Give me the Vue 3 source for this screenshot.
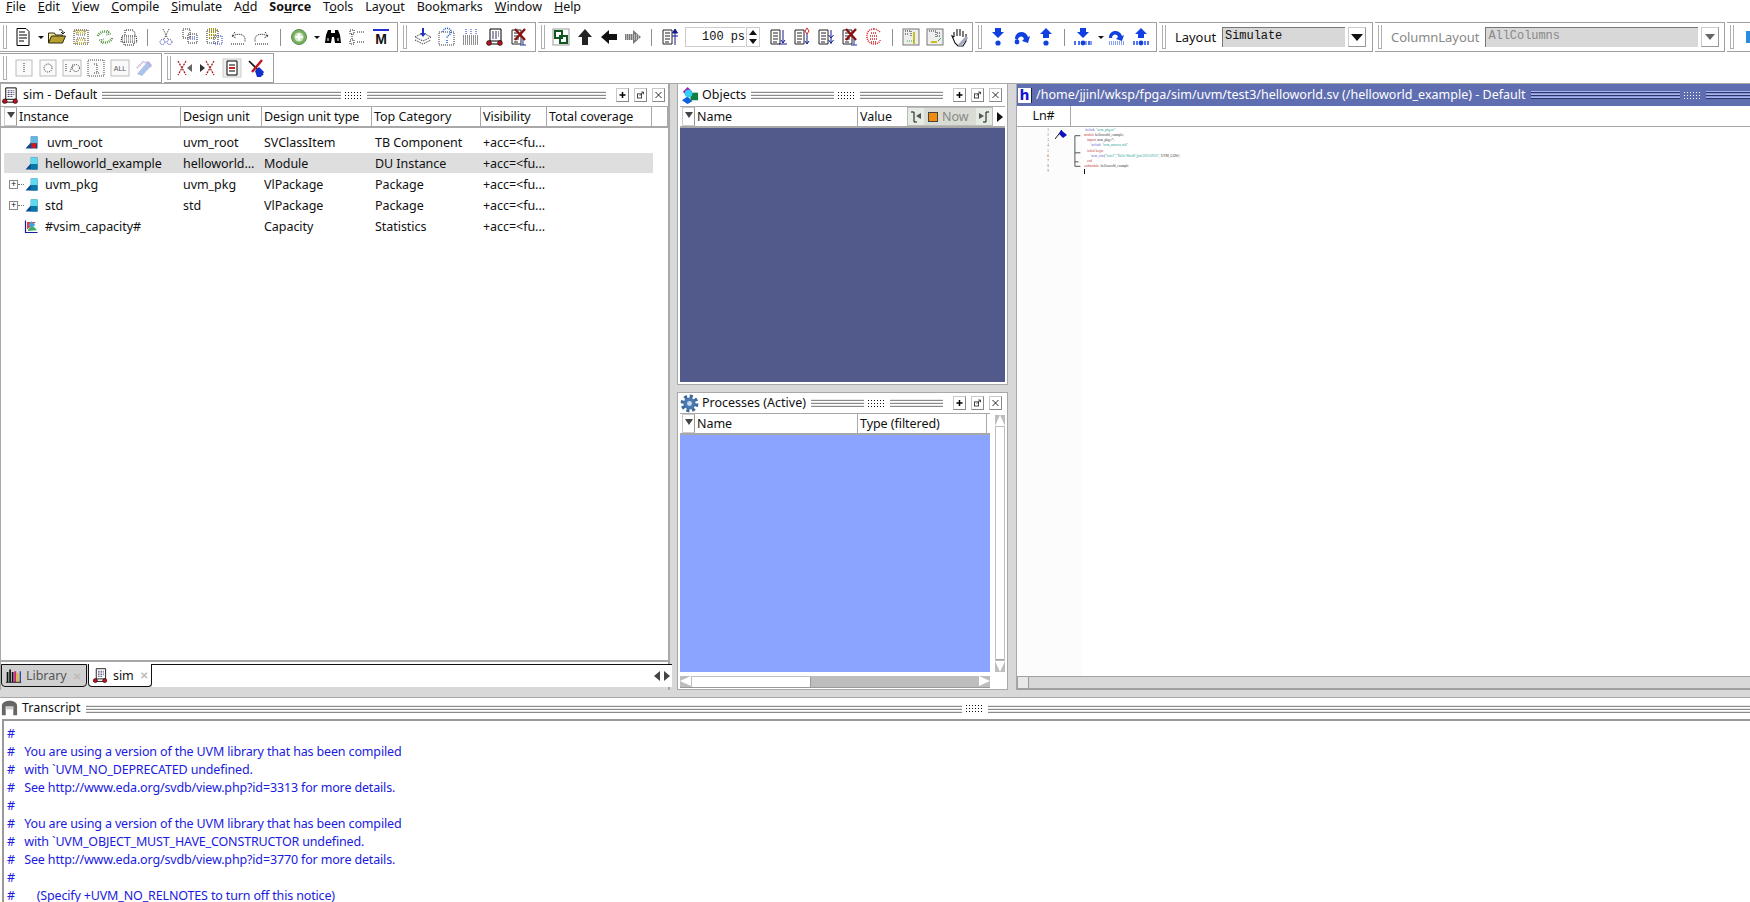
<script setup>
const menus = [
  { pre: "", u: "F", post: "ile" },
  { pre: "", u: "E", post: "dit" },
  { pre: "", u: "V", post: "iew" },
  { pre: "", u: "C", post: "ompile" },
  { pre: "", u: "S", post: "imulate" },
  { pre: "A", u: "d", post: "d" },
  { pre: "So", u: "u", post: "rce", bold: true },
  { pre: "T", u: "o", post: "ols" },
  { pre: "Layo", u: "u", post: "t" },
  { pre: "Boo", u: "k", post: "marks" },
  { pre: "", u: "W", post: "indow" },
  { pre: "", u: "H", post: "elp" },
];

// dithered strokes stand in for the greyed-out toolbar bitmaps
const dot = 'stroke-dasharray="1 1" fill="none"';
const simIcon = `<path d="M5 2h11v12H5z" fill="#fff" stroke="#000"/><path d="M7 5h7M7 7h7M7 9h7M7 11h5" stroke="#336" stroke-dasharray="2 1"/><path d="M3 14l-1 3h14" stroke="#000" fill="none"/><circle cx="4" cy="16" r="2.4" fill="#c01020" stroke="#000" stroke-width=".6"/><circle cx="15" cy="16" r="2.4" fill="#c01020" stroke="#000" stroke-width=".6"/>`;
const docLines = `<path d="M3 3h9v14H3z" fill="#fff" stroke="#222"/><path d="M5 6h5M5 9h5M5 12h5M5 15h4" stroke="#222"/>`;
const icons = {
  new: `<path d="M4 1.5h9l3 3v14H4z" fill="#fff" stroke="#000"/><path d="M6 5h6M6 8h8M6 11h8M6 14h5" stroke="#000"/>`,
  open: `<path d="M1.5 16V6h6l1 2h7v2" fill="#f3e8a0" stroke="#2c2c10"/><path d="M1.5 16l3-7h14l-3 7z" fill="#b8a030" stroke="#2c2c10"/><path d="M12 3c2-1 4 0 4 3M14 5l2 2 2-2" stroke="#222" fill="none"/>`,
  save: `<rect x="3" y="3" width="14" height="14" stroke="#222" ${dot}/><path d="M6 3v5h8V3M6 17v-6h8v6" stroke="#555" ${dot}/><path d="M4 4h12M4 16h12M5 6h10M5 13h10" stroke="#c8b820" stroke-width="1.4" ${dot}/>`,
  reload: `<path d="M3 9c1-4 7-6 11-3M17 11c-1 4-7 6-11 3" stroke="#5a9a40" stroke-width="2.6" ${dot}/><path d="M12 3l4 4-5 1M8 17l-4-4 5-1" stroke="#3a7a30" ${dot}/>`,
  print: `<path d="M6 8V3h8l2 3v3M3 9h14l1 6H2zM5 15v3h10v-3" stroke="#111" ${dot}/><path d="M3 11h14M3 13h14" stroke="#666" ${dot}/>`,
  cut: `<path d="M7 2l5 10M13 2L8 12" stroke="#333" ${dot}/><circle cx="6.5" cy="15" r="2.5" stroke="#2030c0" ${dot}/><circle cx="13.5" cy="15" r="2.5" stroke="#2030c0" ${dot}/>`,
  copy: `<rect x="3" y="2" width="7" height="9" stroke="#222" ${dot}/><rect x="8" y="7" width="9" height="9" stroke="#222" ${dot}/><path d="M10 10h5M10 12h5" stroke="#2030c0" ${dot}/>`,
  paste: `<rect x="3" y="3" width="11" height="13" stroke="#222" ${dot}/><path d="M5 2h7v3H5M5 8h7M5 11h7" stroke="#a89810" stroke-width="2" ${dot}/><rect x="10" y="9" width="8" height="8" stroke="#2030c0" ${dot}/>`,
  undo: `<path d="M4 9l3-4M4 9l4 2M5 9c4-3 12-2 12 3v3M3 17h14" stroke="#111" ${dot}/>`,
  redo: `<path d="M16 9l-3-4M16 9l-4 2M15 9c-4-3-12-2-12 3v3M3 17h14" stroke="#111" ${dot}/>`,
  add: `<circle cx="10" cy="10" r="7.5" fill="#78b060" stroke="#5a8a50"/><circle cx="10" cy="10" r="4.6" fill="#d0e8c0"/><path d="M10 6.5v7M6.5 10h7" stroke="#fff" stroke-width="2.2"/>`,
  find: `<path d="M3 8l2-5h3v3h4V3h3l2 5 1 8h-6l-1-6h-2l-1 6H2z" fill="#000"/><path d="M5 11v3M15 11v3" stroke="#fff"/>`,
  tree: `<path d="M3 3h4v4H3zM3 13h4v4H3zM10 5h7M10 15h7M5 7v6" stroke="#222" ${dot}/>`,
  m: `<rect x="2" y="2" width="16" height="2" fill="#2030d0"/><text x="10" y="17" font-size="14" font-weight="700" font-family="Liberation Sans" text-anchor="middle" fill="#111">M</text>`,
  stack: `<path d="M2 10l8-4 8 4-8 4z M2 13l8 4 8-4" stroke="#111" ${dot}/><path d="M10 1v6" stroke="#2030c0" stroke-width="2"/><path d="M7 6h6l-3 4z" fill="#2030c0"/>`,
  query: `<rect x="2" y="5" width="15" height="13" stroke="#333" ${dot}/><path d="M6 5c0-5 8-5 8 0 0 3-4 3-4 6M10 13v3" stroke="#2060d0" stroke-width="1.6" ${dot}/>`,
  grid: `<path d="M2 9h16M2 11h16M2 13h16M2 15h16M2 17h16" stroke="#222" ${dot}/><path d="M5 2v5M10 2v5M15 2v5" stroke="#2030c0" ${dot}/>`,
  sim: simIcon,
  noblock: `${docLines}<path d="M6 2l10 11M16 2L6 13" stroke="#8a1010" stroke-width="2.4"/><path d="M14 12v6M11 18h6" stroke="#2030a0"/>`,
  chain: `<rect x="2" y="2" width="16" height="16" fill="#fff" stroke="#999"/><rect x="4" y="4" width="7" height="7" fill="none" stroke="#105820" stroke-width="2"/><rect x="9" y="9" width="7" height="7" fill="none" stroke="#105820" stroke-width="2"/>`,
  up: `<path d="M10 2l7 8h-4v8H7v-8H3z" fill="#222"/>`,
  left: `<path d="M2 10l8-7v4h8v6h-8v4z" fill="#111"/>`,
  right: `<path d="M18 10l-8-7v4H2v6h8v4z" fill="#777"/><path d="M3 8h14M3 10h14M3 12h14" stroke="#fff" stroke-dasharray="1 1"/>`,
  runup: `${docLines}<path d="M15 18V3M12.5 6L15 2l2.5 4zM12 9h6" stroke="#101a90" fill="#101a90"/>`,
  rundown: `${docLines}<path d="M15 3v13M11 17h8M13 13l2 3 2-3" stroke="#101a90" fill="none"/>`,
  runred: `${docLines}<path d="M15 7v10M13 14l2 3 2-3" stroke="#101a90" fill="none"/><path d="M15 1l2 3-2 3-2-3z" fill="#fff" stroke="#d02020"/>`,
  runall: `${docLines}<path d="M15 3v14M12.5 8l2.5 3 2.5-3M12.5 13l2.5 3 2.5-3" stroke="#101a90" fill="none"/>`,
  break: `<path d="M10 2c-5 0-7 3-7 7 0 5 3 8 7 8 3 0 6-2 6-4M16 5c-2-2-4-3-6-3M7 6h6M6 9h8M6 12h8M7 15h5" stroke="#d82020" stroke-width="1.6" stroke-dasharray="1 1" fill="none"/>`,
  wave: `<rect x="2" y="2" width="16" height="16" fill="#eee" stroke="#777"/><path d="M4 4h6v5M4 7h4" stroke="#222" ${dot}/><path d="M13 5v12" stroke="#c8c020" stroke-width="2"/><path d="M6 14h7" stroke="#40a040" stroke-dasharray="1 1"/>`,
  wave2: `<rect x="2" y="2" width="16" height="16" fill="#eee" stroke="#777"/><path d="M4 4h7v6M12 6h3M12 9h3" stroke="#222" ${dot}/><path d="M6 15h6" stroke="#c8c020" stroke-width="2"/><path d="M13 14l3-3" stroke="#40a040"/>`,
  hand: `<path d="M5 10V5M8 9V2M11 9V2M14 10V4M5 10l-2-1 3 7 3 3h5l3-5V7" fill="#fff" stroke="#111" stroke-width="1.1"/><path d="M10 19l8-9" stroke="#a0a8c0" stroke-width="3"/>`,
  stepin: `<path d="M7 1h6v4h3l-6 6-6-6h3z" fill="#1040e0"/><circle cx="10" cy="16" r="2.6" fill="#1040e0"/>`,
  stepover: `<path d="M3 12c0-9 11-9 13-2l2-1-2 7-6-2 2-2c-1-4-6-3-6 1z" fill="#1040e0"/><circle cx="5" cy="15" r="2.4" fill="#1040e0"/>`,
  stepout: `<path d="M10 1l6 6h-3v4H7V7H4z" fill="#1040e0"/><circle cx="10" cy="16" r="2.6" fill="#1040e0"/>`,
  stepin2: `<path d="M7 1h6v4h3l-6 6-6-6h3z" fill="#1040e0"/><path d="M2 14v4M6 14v4M16 14v4" stroke="#1040e0" stroke-width="1.5"/><circle cx="10" cy="16" r="2.4" fill="#1040e0"/><path d="M13 14v4M18 14v4" stroke="#1040e0"/>`,
  stepover2: `<path d="M2 11c0-9 11-9 13-2l2-1-2 6-6-2 2-2c-1-4-6-3-6 1z" fill="#1040e0"/><path d="M2 15h16M2 17h16" stroke="#1040e0" stroke-dasharray="1 1"/>`,
  stepout2: `<path d="M10 1l6 6h-3v4H7V7H4z" fill="#1040e0"/><path d="M3 14v4M6 14v4M14 14v4M17 14v4" stroke="#1040e0" stroke-width="1.4"/><circle cx="10" cy="16" r="2.4" fill="#1040e0"/>`,
  i: `<rect x="2" y="2" width="16" height="16" fill="#fafafa" stroke="#bbb"/><path d="M10 5v10" stroke="#333" ${dot}/>`,
  o: `<rect x="2" y="2" width="16" height="16" fill="#fafafa" stroke="#bbb"/><circle cx="10" cy="10" r="4" stroke="#333" ${dot}/>`,
  io: `<rect x="1" y="2" width="18" height="16" fill="#fafafa" stroke="#bbb"/><path d="M4 6v8M8 14l3-8" stroke="#333" ${dot}/><circle cx="14" cy="10" r="3.5" stroke="#333" ${dot}/>`,
  box: `<rect x="2" y="2" width="16" height="16" fill="#fafafa" stroke="#444" stroke-dasharray="1 1"/><path d="M8 6h3v9M8 15h5" stroke="#333" ${dot}/>`,
  all: `<rect x="1" y="2" width="18" height="16" fill="#fafafa" stroke="#bbb"/><text x="10" y="13" font-size="7" font-family="Liberation Sans" text-anchor="middle" fill="#555">ALL</text>`,
  fade: `<path d="M3 16L14 3l4 4L8 18z" fill="#8aa8e0" opacity=".7"/><path d="M3 10l6-6 6 1 2 5" stroke="#c0a0d0" stroke-width="2" ${dot}/>`,
  xl: `<path d="M4 3l8 14M12 3L4 17" stroke="#a01818" stroke-width="1.2" stroke-dasharray="2 1"/><path d="M18 6l-5 4 5 4z" fill="#666"/>`,
  xr: `<path d="M8 3l8 14M16 3L8 17" stroke="#a01818" stroke-width="1.2" stroke-dasharray="2 1"/><path d="M2 6l5 4-5 4z" fill="#333"/>`,
  list: `<rect x="1" y="1" width="18" height="18" fill="#eee" stroke="#ccc"/><path d="M5 3h10v14H5z" fill="#fff" stroke="#000"/><path d="M7 7h6M7 13h6" stroke="#000"/><path d="M7 10h6" stroke="#d02020" stroke-width="2"/>`,
  xblue: `<path d="M3 3l14 14" stroke="#111" stroke-width="1.6"/><path d="M16 2L6 14" stroke="#c01818" stroke-width="2.4"/><path d="M9 13l4-4 5 5-3 5h-4z" fill="#1030d0"/>`,
  mod: `<path d="M2 18l7-8V2h9v16z" fill="#0a4a90"/><rect x="9" y="2" width="9" height="9" fill="#60d8f0"/><rect x="9" y="11" width="9" height="7" fill="#0878a8"/>`,
  modbug: `<path d="M2 18l7-8V2h9v16z" fill="#0a4a90"/><rect x="9" y="2" width="9" height="9" fill="#60b8e0"/><circle cx="13" cy="14" r="3.4" fill="#d01818"/><path d="M9 11l8 7M17 11l-8 7" stroke="#d01818"/>`,
  cap: `<path d="M2 2v16h16" stroke="#1818a0" stroke-width="1.6" fill="none"/><path d="M4 4h12L4 14z" fill="#e04040"/><path d="M5 16c2-8 9-8 12-1z" fill="#40b060"/><path d="M10 3l5 5-5 4-4-4z" fill="#40a0e0"/>`,
  lib: `<path d="M3 18V6M6 18V3M9 18V6" stroke="#111" stroke-width="2"/><path d="M12 18V5" stroke="#d02080" stroke-width="2.4"/><path d="M15 18V7" stroke="#e0c020" stroke-width="2.4"/><path d="M18 18V5" stroke="#2040d0" stroke-width="1.6"/><path d="M1 18h18" stroke="#111"/>`,
  obj: `<path d="M8 1l5 5-5 5-5-5z" fill="#a020c0"/><path d="M8 11l5 5-5 3-6-4z" fill="#1060e0"/><rect x="11" y="7" width="8" height="8" fill="#108040"/><circle cx="9" cy="8" r="4" fill="#30d0f0"/>`,
  gear: `<circle cx="10" cy="10" r="6.4" fill="#4a78b0"/><circle cx="10" cy="10" r="7.6" fill="none" stroke="#3e6898" stroke-width="3.6" stroke-dasharray="3.2 2.77"/><circle cx="10" cy="10" r="2.6" fill="#c8d8ec"/>`,
  trans: `<path d="M2 17V7c0-7 16-7 16 0v10h-4V8H6v9z" fill="#666"/><path d="M6 8h8v3H6z" fill="#ccc"/>`,
  plusBtn: `<path d="M6 2v8M2 6h8" stroke="#000" stroke-width="2"/>`,
  floatBtn: `<rect x="2" y="4.5" width="5.5" height="5.5" fill="none" stroke="#111"/><path d="M5 7l5-5M7 2h3v3" fill="none" stroke="#111"/>`,
  closeBtn: `<path d="M2 2l8 8M10 2l-8 8" stroke="#111" stroke-width="1.2"/>`,
};

const row1a = ["new", "|v", "open", "save", "reload", "print", "|", "cut", "copy", "paste", "undo", "redo", "|", "add", "|v", "find", "tree", "m"];
const row1b = ["stack", "query", "grid", "sim", "noblock"];
const row1c = ["chain", "up", "left", "right", "|"];
const row1e = ["rundown", "runred", "runall", "noblock", "break", "|", "wave", "wave2", "hand"];
const row1f = ["stepin", "stepover", "stepout", "|", "stepin2", "|v", "stepover2", "stepout2"];
const row2a = ["i", "o", "io", "box", "all", "fade"];
const row2b = ["xl", "xr", "list", "xblue"];
const winBtns = ["plusBtn", "floatBtn", "closeBtn"];

const simRows = [
  { icon: "modbug", name: "uvm_root", unit: "uvm_root", type: "SVClassItem", cat: "TB Component", nudge: true },
  { icon: "mod", name: "helloworld_example", unit: "helloworld...", type: "Module", cat: "DU Instance", active: true },
  { icon: "mod", name: "uvm_pkg", unit: "uvm_pkg", type: "VlPackage", cat: "Package", plus: true },
  { icon: "mod", name: "std", unit: "std", type: "VlPackage", cat: "Package", plus: true },
  { icon: "cap", name: "#vsim_capacity#", unit: "", type: "Capacity", cat: "Statistics" },
];

const lineNos = [1, 2, 3, 4, 5, 6, 7, 8, 9];

const transcript = [
  "#",
  "#   You are using a version of the UVM library that has been compiled",
  "#   with `UVM_NO_DEPRECATED undefined.",
  "#   See http://www.eda.org/svdb/view.php?id=3313 for more details.",
  "#",
  "#   You are using a version of the UVM library that has been compiled",
  "#   with `UVM_OBJECT_MUST_HAVE_CONSTRUCTOR undefined.",
  "#   See http://www.eda.org/svdb/view.php?id=3770 for more details.",
  "#",
  "#       (Specify +UVM_NO_RELNOTES to turn off this notice)",
];
</script>

<template>
  <div class="app">
    <nav class="menubar">
      <span v-for="m in menus" :key="m.u + m.post" class="menu" :class="{ bold: m.bold }">{{ m.pre }}<u>{{ m.u }}</u>{{ m.post }}</span>
    </nav>

    <div class="toolrow">
      <div class="tgroup g1">
        <template v-for="(k, i) in row1a" :key="i">
          <span v-if="k === '|'" class="tsep"></span>
          <span v-else-if="k === '|v'" class="tarrow"></span>
          <svg v-else class="ico" viewBox="0 0 20 20" v-html="icons[k]"></svg>
        </template>
      </div>
      <div class="tgroup g2">
        <svg v-for="k in row1b" :key="k" class="ico" viewBox="0 0 20 20" v-html="icons[k]"></svg>
      </div>
      <div class="tgroup g3">
        <template v-for="(k, i) in row1c" :key="i">
          <span v-if="k === '|'" class="tsep"></span>
          <svg v-else class="ico" viewBox="0 0 20 20" v-html="icons[k]"></svg>
        </template>
        <svg class="ico" viewBox="0 0 20 20" v-html="icons.runup"></svg>
        <div class="runlen">100 ps</div>
        <div class="spin"><i class="sp-up"></i><i class="sp-down"></i></div>
        <template v-for="(k, i) in row1e" :key="'e' + i">
          <span v-if="k === '|'" class="tsep"></span>
          <svg v-else class="ico" viewBox="0 0 20 20" v-html="icons[k]"></svg>
        </template>
      </div>
      <div class="tgroup g4">
        <template v-for="(k, i) in row1f" :key="i">
          <span v-if="k === '|'" class="tsep"></span>
          <span v-else-if="k === '|v'" class="tarrow"></span>
          <svg v-else class="ico" viewBox="0 0 20 20" v-html="icons[k]"></svg>
        </template>
      </div>
      <div class="tgroup g5">
        <span class="tlabel">Layout</span>
        <div class="combo">Simulate</div>
        <span class="ddbtn"><i></i></span>
      </div>
      <div class="tgroup g6 off">
        <span class="tlabel">ColumnLayout</span>
        <div class="combo">AllColumns</div>
        <span class="ddbtn"><i></i></span>
      </div>
      <div class="tgroup g7">
        <span class="edge-ico"></span>
      </div>
    </div>

    <div class="toolrow second">
      <div class="tgroup r2a">
        <svg v-for="k in row2a" :key="k" class="ico" viewBox="0 0 20 20" v-html="icons[k]"></svg>
      </div>
      <div class="tgroup r2b">
        <svg v-for="k in row2b" :key="k" class="ico" viewBox="0 0 20 20" v-html="icons[k]"></svg>
      </div>
    </div>

    <div class="workspace">
      <section class="panel left">
        <header class="ptitle">
          <svg class="pico" viewBox="0 0 20 20" v-html="icons.sim"></svg>
          <span class="ptext">sim - Default</span>
          <div class="grip"><span class="rule"></span><span class="dots"></span><span class="rule"></span></div>
          <svg v-for="b in winBtns" :key="b" class="pbtn" viewBox="0 0 12 12" v-html="icons[b]"></svg>
        </header>
        <div class="thead">
          <span class="filter"><i></i></span>
          <span class="th" style="width: 164px">Instance</span>
          <span class="th" style="width: 81px">Design unit</span>
          <span class="th" style="width: 110px">Design unit type</span>
          <span class="th" style="width: 109px">Top Category</span>
          <span class="th" style="width: 66px">Visibility</span>
          <span class="th" style="width: 105px">Total coverage</span>
          <span class="th" style="flex: 1"></span>
        </div>
        <div class="tree">
          <div v-for="r in simRows" :key="r.name" class="trow" :class="{ active: r.active }">
            <span class="c0">
              <span class="plus" :class="{ show: r.plus }">+</span>
              <svg class="tico" viewBox="0 0 20 20" v-html="icons[r.icon]"></svg>
              <span :class="{ nudge: r.nudge }">{{ r.name }}</span>
            </span>
            <span class="c1">{{ r.unit }}</span>
            <span class="c2">{{ r.type }}</span>
            <span class="c3">{{ r.cat }}</span>
            <span class="c4">+acc=&lt;fu...</span>
          </div>
        </div>
        <div class="tabbar">
          <span class="tab off"><svg class="tabico" viewBox="0 0 20 20" v-html="icons.lib"></svg>Library<b>✕</b></span>
          <span class="tab on"><svg class="tabico" viewBox="0 0 20 20" v-html="icons.sim"></svg>sim<b>✕</b></span>
          <span class="tabfill"></span>
          <span class="tabnav"><i class="nl"></i><i class="nr"></i></span>
        </div>
      </section>

      <div class="midcol">
        <section class="panel objects">
          <header class="ptitle">
            <svg class="pico" viewBox="0 0 20 20" v-html="icons.obj"></svg>
            <span class="ptext">Objects</span>
            <div class="grip"><span class="rule"></span><span class="dots"></span><span class="rule"></span></div>
            <svg v-for="b in winBtns" :key="b" class="pbtn" viewBox="0 0 12 12" v-html="icons[b]"></svg>
          </header>
          <div class="thead">
            <span class="filter"><i></i></span>
            <span class="th" style="width: 163px">Name</span>
            <span class="th value">Value</span>
            <div class="nowbox">
              <svg class="nowico" viewBox="0 0 14 14"><path d="M2 2h3v10h3" stroke="#111" fill="none"/><path d="M7 6l5-3v6z" fill="#555"/></svg>
              <span class="now"><i></i>Now</span>
              <svg class="nowico" viewBox="0 0 14 14"><path d="M12 2H9v10H6" stroke="#111" fill="none"/><path d="M7 6L2 3v6z" fill="#555"/></svg>
            </div>
            <span class="more"></span>
          </div>
          <div class="fill dark"></div>
        </section>

        <section class="panel processes">
          <header class="ptitle">
            <svg class="pico" viewBox="0 0 20 20" v-html="icons.gear"></svg>
            <span class="ptext">Processes (Active)</span>
            <div class="grip"><span class="rule"></span><span class="dots"></span><span class="rule"></span></div>
            <svg v-for="b in winBtns" :key="b" class="pbtn" viewBox="0 0 12 12" v-html="icons[b]"></svg>
          </header>
          <div class="procbody">
            <div class="proclist">
              <div class="thead">
                <span class="filter"><i></i></span>
                <span class="th" style="width: 163px">Name</span>
                <span class="th" style="width: 129px">Type (filtered)</span>
              </div>
              <div class="fill light"></div>
            </div>
            <div class="vscroll"><i class="au"></i><span class="vtrack"></span><i class="ad"></i></div>
          </div>
          <div class="hscroll">
            <i class="al"></i><span class="thumb"></span><span class="track"></span><i class="ar"></i>
          </div>
        </section>
      </div>

      <section class="panel source">
        <header class="ptitle blue">
          <span class="hicon">h</span>
          <span class="ptext">/home/jjinl/wksp/fpga/sim/uvm/test3/helloworld.sv (/helloworld_example) - Default</span>
          <div class="grip"><span class="rule"></span><span class="dots"></span><span class="rule"></span></div>
        </header>
        <div class="lnhead"><span>Ln#</span></div>
        <div class="code">
          <div class="gutter">
            <div v-for="n in lineNos" :key="n" class="ln" :class="{ red: n === 6 || n === 7 }">{{ n }}</div>
          </div>
          <div class="marks">
            <svg class="flag" viewBox="0 0 14 10"><path d="M0 10L7 1" stroke="#111"/><path d="M6 1l6 5-4 3-4-4z" fill="#1010c0"/></svg>
            <svg class="folds" viewBox="0 0 10 40"><path d="M1 3h6M1 3v34h6M1 22h6M1 32h4" stroke="#444" fill="none"/></svg>
          </div>
          <div class="lines">
            <div><span class="k">`include</span> <span class="s">"uvm_pkg.sv"</span></div>
            <div><span class="m">module</span> helloworld_example;</div>
            <div class="i1"><span class="m">import</span> uvm_pkg::*;</div>
            <div class="i2"><span class="k">`include</span> <span class="s">"uvm_macros.svh"</span></div>
            <div class="i1"><span class="m">initial begin</span></div>
            <div class="i2"><span class="k">`uvm_info</span>(<span class="s">"info1","Hello World! jjinl 2023.09.05"</span>, UVM_LOW)</div>
            <div class="i1"><span class="m">end</span></div>
            <div><span class="m">endmodule:</span> helloworld_example</div>
            <div class="caret"></div>
          </div>
        </div>
        <div class="srcscroll"><i class="al2"></i><span class="track2"></span></div>
      </section>
    </div>

    <section class="transcript">
      <header class="ptitle">
        <svg class="pico" viewBox="0 0 20 20" v-html="icons.trans"></svg>
        <span class="ptext">Transcript</span>
        <div class="grip tgrip"><span class="rule"></span><span class="dots"></span><span class="rule"></span></div>
      </header>
      <div class="log">
        <div v-for="(l, i) in transcript" :key="i" class="logline">{{ l }}</div>
      </div>
    </section>
  </div>
</template>

<style>
body {
  background: #d8d8d8;
  overflow: hidden;
}
</style>

<style scoped>
.app {
  width: 1750px;
  height: 902px;
  overflow: hidden;
  display: flex;
  flex-direction: column;
  font-family: "Noto Sans", sans-serif;
  font-size: 12.5px;
  letter-spacing: -0.05px;
  color: #111;
  background: #fff;
}

.menubar {
  height: 22px;
  display: flex;
  padding-left: 6px;
  gap: 12px;
  line-height: 13px;
  flex: none;
  align-items: flex-start;
}

.menu u {
  text-underline-offset: 1px;
}

.menu.bold {
  font-weight: 700;
}

.toolrow {
  height: 31px;
  flex: none;
  display: flex;
  gap: 2px;
}

.toolrow.second {
  height: 30px;
}

.tgroup {
  display: flex;
  align-items: center;
  height: 30px;
  box-sizing: border-box;
  border: 1px solid #a0a0a0;
  border-width: 1px 1px 1px 0;
  position: relative;
}

.tgroup::before {
  content: "";
  position: absolute;
  left: 3px;
  top: 2px;
  bottom: 2px;
  width: 2px;
  border: 1px solid #b0b0b0;
  border-width: 0 1px 1px 1px;
}

.g1 { width: 398px; padding-left: 11px; }
.g2 { width: 136px; padding-left: 11px; }
.g3 { width: 435px; padding-left: 11px; }
.g4 { width: 182px; padding-left: 11px; }
.g5 { width: 214px; padding-left: 16px; }
.g6 { width: 350px; padding-left: 16px; }
.g7 { flex: 1; border-right: 0; }
.r2a { width: 162px; padding-left: 12px; }
.r2b { width: 110px; padding-left: 8px; }

.ico {
  width: 20px;
  height: 20px;
  margin: 0 2px;
  flex: none;
  overflow: visible;
}

.tsep {
  width: 13px;
  height: 17px;
  flex: none;
  background: linear-gradient(#222 50%, transparent 50%) center / 1px 2px repeat-y;
}

.tarrow {
  width: 10px;
  height: 20px;
  flex: none;
  position: relative;
}

.tarrow::after {
  content: "";
  position: absolute;
  left: 3px;
  top: 9px;
  border: 3px solid transparent;
  border-top: 3px solid #111;
}

.runlen {
  width: 60px;
  height: 20px;
  margin-left: 3px;
  box-sizing: border-box;
  border: 1px solid #ccc;
  border-width: 1px 0 1px 1px;
  text-align: right;
  padding-right: 0;
  font: 12px/18px "Liberation Mono", monospace;
  white-space: pre;
}

.spin {
  width: 14px;
  height: 20px;
  margin: 0 6px 0 1px;
  display: flex;
  flex-direction: column;
  justify-content: space-between;
  border: 1px solid #ccc;
  box-sizing: border-box;
  align-items: center;
  padding: 2px 0;
}

.sp-up, .sp-down {
  width: 0;
  height: 0;
  border: 4px solid transparent;
}

.sp-up {
  border-top: 0;
  border-bottom: 5px solid #111;
}

.sp-down {
  border-bottom: 0;
  border-top: 5px solid #111;
}

.tlabel {
  margin-right: 6px;
  font-size: 13px;
}

.combo {
  height: 20px;
  background: #d8d8d8;
  border-top: 1px solid #777;
  border-left: 1px solid #777;
  box-sizing: border-box;
  padding-left: 2px;
  font: 12px/17px "Liberation Mono", monospace;
}

.g5 .combo { width: 123px; }
.g6 .combo { width: 213px; }

.ddbtn {
  width: 18px;
  height: 20px;
  margin-left: 3px;
  box-sizing: border-box;
  border: 1px solid #ccc;
  border-bottom-color: #999;
  border-right-color: #999;
  display: flex;
  align-items: center;
  justify-content: center;
}

.ddbtn i {
  width: 0;
  height: 0;
  border: 6px solid transparent;
  border-bottom: 0;
  border-top: 7px solid #111;
}

.off .tlabel, .off .combo {
  color: #888;
}

.off .ddbtn i {
  border-width: 6px 5px 0;
  border-top-color: #666;
}

.edge-ico {
  position: absolute;
  right: 0;
  top: 8px;
  width: 4px;
  height: 12px;
  background: #2a8ce0;
}

.workspace {
  height: 614px;
  flex: none;
  display: flex;
  background: #d8d8d8;
  gap: 7px;
  box-sizing: border-box;
  border-top: 1px solid #a8a8a8;
}

.panel {
  background: #fff;
  display: flex;
  flex-direction: column;
  box-sizing: border-box;
}

.left {
  width: 670px;
  height: 606px;
  border-right: 2px solid #a8a8a8;
  border-left: 1px solid #a8a8a8;
}

.midcol {
  width: 331px;
  flex: none;
  display: flex;
  flex-direction: column;
  gap: 7px;
}

.objects {
  height: 301px;
  border: 1px solid #a8a8a8;
  border-top: 0;
  padding: 0 2px 2px;
}

.processes {
  height: 298px;
  border: 1px solid #a8a8a8;
  padding: 0 2px 1px;
}

.processes .ptitle {
  height: 20px;
}

.source {
  flex: 1;
  margin-left: 1px;
  height: 606px;
  border-left: 1px solid #a8a8a8;
  overflow: hidden;
}

.ptitle {
  height: 22px;
  flex: none;
  display: flex;
  align-items: center;
  padding-right: 3px;
}

.ptext {
  white-space: nowrap;
  flex: none;
  font-size: 12.5px;
  letter-spacing: 0;
  position: relative;
  top: -1px;
}

.pico {
  width: 19px;
  height: 19px;
  flex: none;
  margin: 0 3px 0 0;
}

.grip {
  flex: 1;
  display: flex;
  align-items: center;
  margin: 0 5px;
  height: 9px;
}

.rule {
  flex: 1;
  height: 8px;
  background: repeating-linear-gradient(#e8e8e8 0 1px, #8a8a8a 1px 2px, #fff 2px 3px);
}

.dots {
  width: 18px;
  margin: 0 4px;
  height: 7px;
  background: radial-gradient(circle at 0.5px 0.5px, #111 0.5px, transparent 0.7px) 0 0 / 3px 3px;
}

.pbtn {
  width: 13px;
  height: 14px;
  margin-left: 5px;
  box-sizing: border-box;
  padding: 1px;
  border: 1px solid #c8c8c8;
  border-right-color: #888;
  border-bottom-color: #888;
  flex: none;
}

.blue {
  background: #5f6eb0;
  color: #fff;
  padding-right: 0;
}

.blue .ptext {
  font-size: 12.5px;
  letter-spacing: 0.01px;
}

.blue .rule {
  background: repeating-linear-gradient(#a8b4f0 0 1px, #2c3468 1px 2px, #8a96d8 2px 3px);
}

.blue .grip {
  margin: 0 0 0 5px;
  flex: none;
  width: 324px;
}

.blue .dots {
  background-image: radial-gradient(circle at 0.5px 0.5px, #fff 0.5px, transparent 0.7px);
}

.hicon {
  width: 13px;
  height: 15px;
  margin: 0 4px 0 1px;
  background: #fff;
  border-right: 1px solid #223;
  color: #1414d0;
  font: 700 14px/14px "DejaVu Sans", sans-serif;
  text-align: center;
  flex: none;
}

.thead {
  height: 22px;
  flex: none;
  display: flex;
  box-sizing: border-box;
  border-top: 1px solid #a8a8a8;
  border-bottom: 2px solid #a8a8a8;
  padding-left: 3px;
}

.objects .thead, .processes .thead {
  padding-left: 2px;
}

.filter {
  width: 13px;
  flex: none;
  box-sizing: border-box;
  border: 1px solid #ccc;
  border-right-color: #999;
  display: flex;
  justify-content: center;
  padding-top: 4px;
}

.filter i {
  width: 0;
  height: 0;
  border: 4px solid transparent;
  border-top: 6px solid #444;
  border-bottom: 0;
}

.th {
  flex: none;
  box-sizing: border-box;
  border-right: 1px solid #a8a8a8;
  padding-left: 2px;
  line-height: 20px;
  white-space: nowrap;
  overflow: hidden;
}

.tree {
  flex: 1;
  padding: 4px 0 0 3px;
  border-bottom: 2px solid #a8a8a8;
}

.trow {
  height: 21px;
  display: flex;
  align-items: center;
  width: 649px;
  white-space: nowrap;
}

.trow.active {
  background: linear-gradient(#dedede 20px, #fff 20px);
}

.c0 {
  width: 179px;
  display: flex;
  align-items: center;
  flex: none;
}

.plus {
  width: 9px;
  height: 9px;
  margin: 0 0 0 5px;
  box-sizing: border-box;
  border: 1px solid transparent;
  font: 9px/7px "Liberation Sans", sans-serif;
  text-align: center;
  color: transparent;
  flex: none;
  position: relative;
}

.plus.show {
  border-color: #888;
  color: #111;
}

.plus.show::after {
  content: "";
  position: absolute;
  left: 8px;
  top: 3px;
  width: 6px;
  border-top: 1px dotted #777;
}

.tico {
  width: 15px;
  height: 15px;
  margin: 0 6px 0 6px;
  flex: none;
}

.nudge {
  margin-left: 2px;
}

.c1 { width: 81px; flex: none; }
.c2 { width: 111px; flex: none; }
.c3 { width: 108px; flex: none; }
.c4 { width: 70px; flex: none; }

.tabbar {
  height: 26px;
  flex: none;
  display: flex;
  align-items: flex-start;
  margin-top: 2px;
  background: #d8d8d8;
}

.tab {
  height: 23px;
  box-sizing: border-box;
  display: flex;
  align-items: center;
  padding: 0 3px;
  border: 1px solid #111;
  border-top: 0;
  border-radius: 0 0 4px 4px;
  flex: none;
}

.tab b {
  color: #bbb;
  font-size: 10px;
  margin-left: 6px;
}

.tab.off {
  width: 86px;
  background: #d0d0d0;
  color: #555;
  border-top: 1px solid #111;
}

.tab.on {
  width: 64px;
  background: #fff;
  margin-left: 1px;
}

.tabico {
  width: 17px;
  height: 17px;
  margin-right: 4px;
  flex: none;
}

.tabfill {
  width: 500px;
  height: 23px;
  box-sizing: border-box;
  border-top: 1px solid #111;
  background: #fff;
  flex: none;
}

.tabnav {
  display: flex;
  gap: 4px;
  padding: 6px 2px 0 2px;
  height: 23px;
  box-sizing: border-box;
  background: #fff;
  flex: 1;
  border-top: 1px solid #111;
}

.nl, .nr {
  width: 0;
  height: 0;
  border: 5px solid transparent;
}

.nl { border-left: 0; border-right: 6px solid #444; }
.nr { border-right: 0; border-left: 6px solid #444; }

.value {
  width: 49px;
  border-right: 0;
}

.nowbox {
  display: flex;
  height: 19px;
  flex: none;
  width: 86px;
  background: #e4ece4;
  box-sizing: border-box;
  border: 1px solid #bbb;
  align-items: center;
}

.nowico {
  width: 14px;
  height: 14px;
  margin: 0 1px;
  flex: none;
}

.now {
  flex: 1;
  background: #d8dcd4;
  color: #888;
  display: flex;
  align-items: center;
  height: 100%;
  padding-left: 4px;
  line-height: 16px;
}

.now i {
  width: 8px;
  height: 8px;
  background: #f08c10;
  border: 1px solid #444;
  margin-right: 4px;
}

.more {
  width: 0;
  height: 0;
  margin: 5px 0 0 4px;
  border: 5px solid transparent;
  border-right: 0;
  border-left: 6px solid #111;
}

.fill {
  flex: 1;
}

.dark { background: #515a8a; }
.light { background: #8aa4ff; }

.procbody {
  flex: 1;
  display: flex;
  min-height: 0;
}

.proclist {
  width: 310px;
  flex: none;
  display: flex;
  flex-direction: column;
  margin-right: 5px;
}

.vscroll {
  flex: 1;
  display: flex;
  flex-direction: column;
  background: #bdbdbd;
  margin-top: 2px;
}

.vtrack {
  flex: 1;
  background: #fff;
  margin: 0 1px;
  border-bottom: 1px solid #aaa;
}

.au, .ad {
  height: 12px;
  position: relative;
  flex: none;
}

.au::after, .ad::after {
  content: "";
  position: absolute;
  left: 0;
  border: 5.5px solid transparent;
}

.au::after { top: 0; border-top: 0; border-bottom: 11px solid #fff; }
.ad::after { bottom: 0; border-bottom: 0; border-top: 11px solid #fff; }

.hscroll {
  height: 12px;
  width: 310px;
  flex: none;
  margin-top: 4px;
  display: flex;
  background: #bdbdbd;
  border-bottom: 1px solid #999;
  box-sizing: border-box;
}

.thumb {
  width: 119px;
  background: #fff;
  border-right: 1px solid #999;
  margin-top: 1px;
  box-sizing: border-box;
}

.track {
  flex: 1;
}

.al, .ar {
  width: 12px;
  position: relative;
  flex: none;
}

.al::after, .ar::after {
  content: "";
  position: absolute;
  top: 0;
  border: 5.5px solid transparent;
}

.al::after { left: 0; border-left: 0; border-right: 11px solid #fff; }
.ar::after { right: 0; border-right: 0; border-left: 11px solid #fff; }

.lnhead {
  height: 21px;
  flex: none;
  border-bottom: 1px solid #a8a8a8;
  box-sizing: border-box;
}

.lnhead span {
  display: block;
  width: 54px;
  height: 100%;
  border-right: 1px solid #a8a8a8;
  text-align: center;
  line-height: 20px;
  box-sizing: border-box;
}

.code {
  flex: 1;
  display: flex;
  font: 3.4px/5.15px "Liberation Serif", serif;
  letter-spacing: 0;
  padding-top: 1px;
  min-height: 0;
}

.gutter {
  width: 32px;
  text-align: right;
  color: #666;
  background: #fcfcfc;
  flex: none;
}

.ln.red { color: #d02020; }

.marks {
  width: 33px;
  flex: none;
  position: relative;
  background: #fcfcfc;
}

.flag {
  position: absolute;
  left: 6px;
  top: 1px;
  width: 14px;
  height: 10px;
}

.folds {
  position: absolute;
  left: 25px;
  top: 3px;
  width: 9px;
  height: 40px;
}

.lines {
  padding-left: 2px;
  color: #333;
  white-space: pre;
}

.i1 { padding-left: 3px; }
.i2 { padding-left: 6px; }
.k { color: #6a60d8; }
.s { color: #20a090; }
.m { color: #c04040; }

.caret {
  width: 1px;
  height: 5px;
  background: #111;
}

.srcscroll {
  height: 14px;
  flex: none;
  display: flex;
  border: 1px solid #a0a0a0;
  border-width: 1px 0 2px 1px;
  background: #d8d8d8;
  box-sizing: border-box;
}

.al2 {
  width: 10px;
  border-right: 1px solid #999;
  background: #e8e8e8;
  flex: none;
}

.track2 {
  flex: 1;
}

.transcript {
  flex: 1;
  background: #fff;
  min-height: 0;
  display: flex;
  flex-direction: column;
  overflow: hidden;
}

.transcript .ptitle {
  height: 21px;
  border-top: 1px solid #a8a8a8;
  padding-right: 0;
}

.tgrip {
  flex: none;
  width: 1778px;
  margin: 0 0 0 5px;
}

.log {
  flex: 1;
  margin-left: 2px;
  border-top: 2px solid #999;
  border-left: 2px solid #999;
  padding: 4px 0 0 3px;
  color: #1a1ae0;
  line-height: 17.95px;
  letter-spacing: -0.15px;
  overflow: hidden;
}

.logline {
  white-space: pre;
}
</style>
